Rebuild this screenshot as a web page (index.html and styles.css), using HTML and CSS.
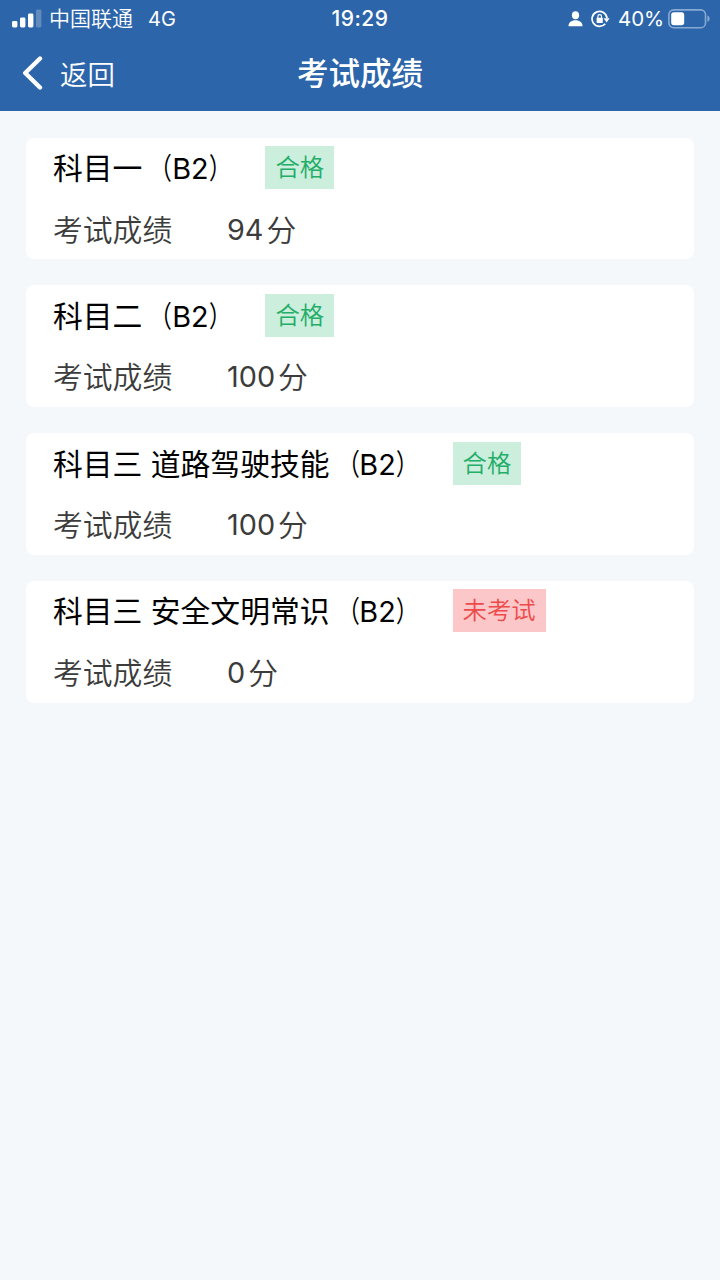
FILE: index.html
```html
<!DOCTYPE html>
<html lang="zh-CN">
<head>
  <meta charset="UTF-8">
  <meta name="viewport" content="width=device-width, initial-scale=1">
  <title>考试成绩</title>
  <link rel="stylesheet" href="styles.css">
</head>
<body>
  <header class="header">
    <div class="status-bar">
      <div class="status-left">
        <svg class="signal" width="30" height="20" viewBox="0 0 30 20" fill="#fff">
          <rect x="0" y="12" width="5.4" height="6.5" rx="1.4"/>
          <rect x="8" y="8.5" width="5.4" height="10" rx="1.4"/>
          <rect x="16" y="4.5" width="5.4" height="14" rx="1.4"/>
          <rect x="24" y="0.5" width="5.4" height="18" rx="1.4" opacity="0.25"/>
        </svg>
        <span class="carrier">中国联通</span>
        <span class="network">4G</span>
      </div>
      <div class="time">19:29</div>
      <div class="status-right">
        <svg class="person" width="15" height="16" viewBox="0 0 15 16" fill="#fff">
          <ellipse cx="7.5" cy="4.2" rx="3.6" ry="4"/>
          <path d="M0.5 15.2C0.3 11.5 3.5 9.2 7.5 9.2s7.2 2.3 7 6z"/>
        </svg>
        <svg class="lock" width="19" height="18" viewBox="0 0 19 18" fill="none" stroke="#fff" stroke-width="1.7">
          <path d="M14.3 13.7A7.5 7.5 0 1 1 16 8"/>
          <path d="M12.6 8.2h6l-3 4.2z" fill="#fff" stroke="none"/>
          <rect x="5.6" y="7.8" width="6.2" height="5.2" rx="0.8" fill="#fff" stroke="none"/>
          <path d="M6.9 8V6.4a1.8 1.8 0 0 1 3.6 0V8" stroke-width="1.2"/>
        </svg>
        <span class="percent">40%</span>
        <svg class="battery" width="43" height="20" viewBox="0 0 43 20">
          <rect x="0.9" y="0.9" width="36.6" height="17.8" rx="4.8" fill="none" stroke="#86aad4" stroke-width="1.6"/>
          <rect x="3.2" y="3.2" width="13" height="13" rx="2.6" fill="#fff"/>
          <path d="M39.4 6.6c3 1.2 3 5.2 0 6.4z" fill="#86aad4"/>
        </svg>
      </div>
    </div>
    <nav class="nav-bar">
      <a class="back">
        <svg width="22" height="34" viewBox="0 0 22 34" fill="none" stroke="#fff" stroke-width="4.4" stroke-linecap="round" stroke-linejoin="round">
          <path d="M18 2.5L3.2 17 18 31.5"/>
        </svg>
        <span>返回</span>
      </a>
      <h1>考试成绩</h1>
    </nav>
  </header>

  <main class="list">
    <section class="card">
      <div class="subject"><h2>科目一<span class="open">（</span><span class="type">B2<span class="close">）</span></span></h2><span class="tag pass">合格</span></div>
      <div class="score"><span class="label">考试成绩</span><span class="num">94</span>分</div>
    </section>
    <section class="card">
      <div class="subject"><h2>科目二<span class="open">（</span><span class="type">B2<span class="close">）</span></span></h2><span class="tag pass">合格</span></div>
      <div class="score"><span class="label">考试成绩</span><span class="num">100</span>分</div>
    </section>
    <section class="card">
      <div class="subject"><h2>科目三 道路驾驶技能<span class="open">（</span><span class="type">B2<span class="close">）</span></span></h2><span class="tag pass">合格</span></div>
      <div class="score"><span class="label">考试成绩</span><span class="num">100</span>分</div>
    </section>
    <section class="card">
      <div class="subject"><h2>科目三 安全文明常识<span class="open">（</span><span class="type">B2<span class="close">）</span></span></h2><span class="tag pending">未考试</span></div>
      <div class="score"><span class="label">考试成绩</span><span class="num">0</span>分</div>
    </section>
  </main>
</body>
</html>
```
FILE: styles.css
```css
* {
  box-sizing: border-box;
}
body {
  margin: 0;
  min-height: 1280px;
  background-color: #f4f8fb;
  font-family: Inter, "Noto Sans CJK SC", sans-serif;
  color: #000;
}
h1, h2 {
  margin: 0;
}
.header {
  height: 111px;
  background-color: #2c65a9;
  color: #fff;
}
.status-bar {
  display: grid;
  grid-template-columns: 1fr auto 1fr;
  align-items: center;
  height: 37px;
  padding: 0 9px 0 12px;
  font-size: 21px;
  line-height: 36px;
}
.status-left, .status-right {
  display: flex;
  align-items: center;
}
.status-left {
  font-weight: 350;
}
.status-right {
  justify-content: flex-end;
}
.carrier {
  margin-left: 7px;
}
.network {
  margin-left: 15px;
  font-size: 20px;
  font-weight: 400;
}
.time {
  margin-left: -3px;
  font-size: 21px;
  font-weight: 500;
  letter-spacing: 0.5px;
}
.lock {
  margin-left: 8px;
}
.percent {
  margin-left: 8px;
  font-size: 20.5px;
  letter-spacing: -0.1px;
}
.battery {
  margin-left: 4px;
}
.nav-bar {
  display: grid;
  grid-template-columns: 1fr auto 1fr;
  align-items: center;
  height: 72px;
  padding: 0 22px;
}
.back {
  display: flex;
  align-items: center;
  font-size: 27.4px;
  font-weight: 350;
}
.back span {
  margin-left: 16px;
  padding-top: 3px;
  line-height: 38px;
}
.nav-bar h1 {
  padding-top: 1px;
  font-size: 31.5px;
  font-weight: 500;
  line-height: 44px;
}
.list {
  display: flex;
  flex-direction: column;
  gap: 26px;
  padding: 26.5px 26px;
}
.card {
  height: 121.75px;
  padding: 8px 27px;
  background-color: #fff;
  border-radius: 8px;
}
.subject {
  display: flex;
  align-items: center;
  height: 44px;
}
.subject h2 {
  padding-top: 2px;
  font-size: 29.8px;
  font-weight: 400;
  line-height: 44px;
  white-space: nowrap;
}
.subject .type {
  font-size: 28.8px;
}
/* narrower brackets around the licence type */
.open, .close {
  display: inline-block;
  line-height: 1;
  transform: scaleX(0.75);
}
.open {
  transform-origin: right;
}
.close {
  transform-origin: left;
}
.tag {
  margin-left: 28px;
  height: 43px;
  padding: 0 10px;
  font-size: 24.4px;
  font-weight: 350;
  line-height: 43px;
}
.pass {
  background-color: #cceedd;
  color: #22ad68;
}
.pending {
  background-color: #fcc7c8;
  color: #ed4b4b;
}
.score {
  display: flex;
  align-items: center;
  margin-top: 18px;
  font-size: 29.8px;
  font-weight: 350;
  line-height: 44px;
  color: #3c3c3c;
}
.label {
  width: 174px;
}
.num {
  margin-right: 3px;
  font-size: 28.8px;
  font-weight: 400;
}
```
